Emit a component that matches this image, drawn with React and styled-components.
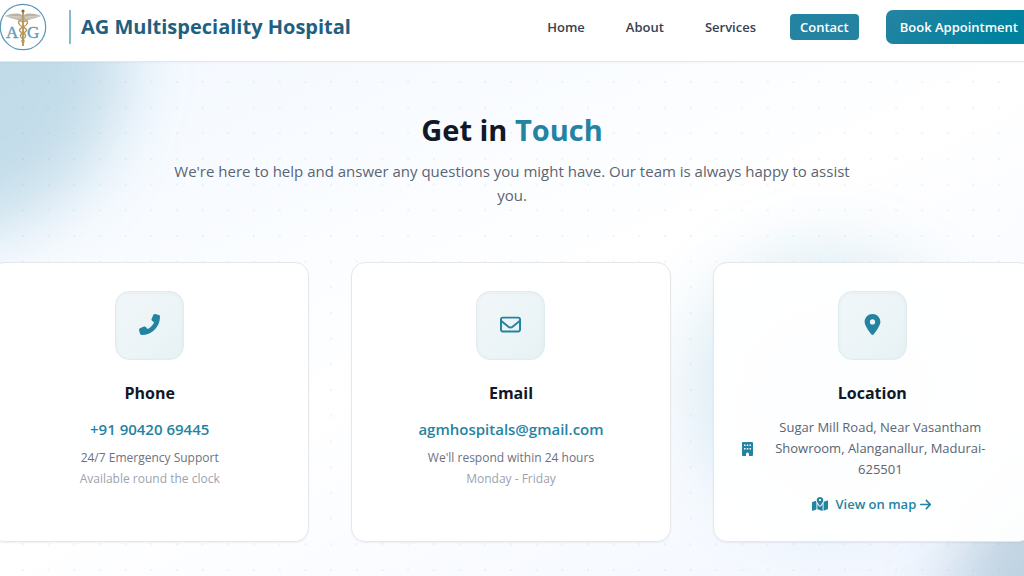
import React from 'react'
import styled, { createGlobalStyle } from 'styled-components'
import {
    FaArrowRight,
    FaLocationDot,
    FaMapLocationDot,
    FaPhone,
    FaRegEnvelope
} from 'react-icons/fa6'

const GlobalStyle = createGlobalStyle`
    * {
        box-sizing: border-box;
    }

    body {
        margin: 0;
        font-family: "Open Sans", "Noto Sans", sans-serif;
        color: #111827;
        background: white;
        overflow: hidden;
    }

    h1, h2, p {
        margin: 0;
    }

    a {
        text-decoration: none;
    }
`

const Page = styled.div`
    min-height: 100vh;
    display: flex;
    flex-direction: column;
`

const Header = styled.header`
    display: flex;
    align-items: center;
    justify-content: space-between;
    height: 62px;
    margin: 0 -8px 0 -1px;
    padding-bottom: 8px;
    background: white;
    border-bottom: 1px solid #e5e7eb;
    box-shadow: 0 1px 2px rgba(0, 0, 0, 0.03);
    position: relative;
    z-index: 1;
`

const Brand = styled.a`
    display: flex;
    align-items: center;
    color: #1f6080;
`

const LogoImage = styled.svg`
    width: 48px;
    height: 48px;
`

const BrandName = styled.span`
    margin-left: 22px;
    padding-left: 10px;
    border-left: 2px solid #85bccd;
    font-size: 20px;
    font-weight: 700;
    line-height: 34px;
    white-space: nowrap;
`

const Nav = styled.nav`
    display: flex;
    align-items: center;
    font-size: 13px;
    font-weight: 600;
    line-height: 26px;
    white-space: nowrap;
`

const NavLink = styled.a`
    margin: ${props => (props.$active ? '0 27px 0 3px' : '0 21px 0 0')};
    padding: 0 10px;
    border-radius: 4px;
    color: ${props => (props.$active ? 'white' : '#374151')};
    background: ${props => (props.$active ? '#2583a2' : 'transparent')};
`

const BookButton = styled.button`
    padding: 0 14px;
    border: none;
    border-radius: 7px;
    color: white;
    background: linear-gradient(135deg, #2583a2 0%, #00829f 80%);
    font: inherit;
    line-height: 34px;
    cursor: pointer;
`

const Contact = styled.main`
    flex: 1;
    position: relative;
    overflow: hidden;
    padding: 47px 0 33px;
    background: linear-gradient(155deg, #f2f8ff 0%, #ffffff 50%, #f1f6ff 100%);
`

const Dots = styled.div`
    position: absolute;
    inset: 0 -2px;
    background-image: radial-gradient(circle at center, rgba(37, 131, 162, 0.08) 1px, transparent 1px);
    background-size: 2.5% 5%;
    background-position: 12px 7px;
`

const Blob = styled.div`
    position: absolute;
    width: 346px;
    height: 346px;
    border-radius: 50%;
    filter: blur(34px);
`

const BlobLeft = styled(Blob)`
    top: -174px;
    left: -222px;
    background: rgba(37, 131, 162, 0.24);
`

const BlobCenter = styled(Blob)`
    top: 186px;
    right: 60px;
    width: 274px;
    height: 274px;
    background: rgba(37, 145, 170, 0.14);
`

const BlobRight = styled(Blob)`
    right: -272px;
    bottom: -212px;
    background: rgba(31, 96, 128, 0.24);
`

const Intro = styled.div`
    position: relative;
    max-width: 692px;
    margin: 0 auto;
    text-align: center;
`

const Title = styled.h1`
    font-size: 29px;
    font-weight: 700;
    line-height: 42px;

    span {
        color: #2583a2;
    }
`

const Lead = styled.p`
    margin-top: 8px;
    color: #5b6471;
    font-size: 15px;
    line-height: 24px;
`

const CardGrid = styled.div`
    position: relative;
    display: grid;
    grid-template-columns: repeat(3, 1fr);
    gap: 42px;
    margin: 55px -8px 0 -10px;
`

const Card = styled.section`
    display: flex;
    flex-direction: column;
    align-items: center;
    min-height: 280px;
    padding: 28px 28px 26px;
    border: 1px solid #e5e7eb;
    border-radius: 14px;
    background: rgba(255, 255, 255, 0.95);
    box-shadow: 0 1px 2px rgba(0, 0, 0, 0.06);
    text-align: center;
`

const IconBox = styled.div`
    display: flex;
    align-items: center;
    justify-content: center;
    width: 69px;
    height: 69px;
    padding-bottom: 2px;
    border: 1px solid #dfecf0;
    border-radius: 14px;
    color: #2583a2;
    background: linear-gradient(135deg, #f2f7f9, #e7f2f5);
    box-shadow: inset 0 1px 4px rgba(0, 0, 0, 0.04);
    font-size: 21px;
`

const PhoneIcon = styled(FaPhone)`
    transform: scaleX(-1);
`

const CardTitle = styled.h2`
    margin: 20px 0 11px;
    font-size: 16px;
    font-weight: 700;
    line-height: 26px;
`

const CardLink = styled.a`
    margin-bottom: 6px;
    color: #2583a2;
    font-size: 15px;
    font-weight: 600;
    line-height: 24px;
`

const Note = styled.p`
    color: ${props => (props.$light ? '#9ca3af' : '#6b7280')};
    font-size: 12px;
    line-height: 21px;
`

const Address = styled.div`
    display: flex;
    align-items: center;
    width: 100%;

    p {
        flex: 1;
        padding: 0 16px 0 21px;
        color: #5b6471;
        font-size: 13px;
        line-height: 21px;
    }
`

const BuildingIcon = styled.svg`
    flex-shrink: 0;
    width: 11px;
    height: 14px;
    fill: #2583a2;
`

const MapLink = styled.a`
    display: flex;
    align-items: center;
    margin-top: 13px;
    color: #2583a2;
    font-size: 13px;
    font-weight: 600;
    line-height: 22px;

    span {
        margin: 0 3px 0 7px;
    }
`

const Logo = () => (
    <LogoImage viewBox="0 2 48 48" aria-hidden="true">
        <circle cx="24" cy="26" r="22.7" fill="white" stroke="#5c97b8" strokeWidth="1.2" />
        <g fontFamily="Liberation Serif, serif" fontSize="17" fill="#5f9dbd" stroke="#5f9dbd" strokeWidth="0.4">
            <text x="7" y="37">A</text>
            <text x="28" y="37">G</text>
        </g>
        <path
            d="M23 19C18 20 13 17 6 15C10 13 19 11 23 14ZM25 19C30 20 35 17 42 15C38 13 29 11 25 14Z"
            fill="#b9b4a6"
        />
        <path d="M8 15L22 16M13 17L22 17M40 15L26 16M35 17L26 17" stroke="#e8e4db" strokeWidth="0.6" />
        <path d="M24 10V45" stroke="#a98545" strokeWidth="1.6" />
        <circle cx="24" cy="10" r="1.6" fill="#8d6d37" />
        <path
            d="M24 21C17 17 19 24 24 26C30 29 27 31 24 32C20 34 21 36 24 38C26 40 25 41 24 42M24 21C31 17 29 24 24 26C18 29 21 31 24 32C28 34 27 36 24 38C22 40 23 41 24 42"
            fill="none"
            stroke="#b8975c"
            strokeWidth="1.4"
        />
    </LogoImage>
)

const Building = () => (
    <BuildingIcon viewBox="0 0 22 28" aria-hidden="true">
        <path
            fillRule="evenodd"
            d="M2 0H20Q22 0 22 2V26Q22 28 20 28H14V24Q14 21 11 21Q8 21 8 24V28H2Q0 28 0 26V2Q0 0 2 0ZM4 5V8H7V5ZM9.500 5V8H12.500V5ZM15 5V8H18V5ZM4 12V15H7V12ZM9.500 12V15H12.500V12ZM15 12V15H18V12Z"
        />
    </BuildingIcon>
)

const App = () => (
    <Page>
        <GlobalStyle />
        <Header>
            <Brand href="#home">
                <Logo />
                <BrandName>AG Multispeciality Hospital</BrandName>
            </Brand>
            <Nav>
                <NavLink href="#home">Home</NavLink>
                <NavLink href="#about">About</NavLink>
                <NavLink href="#services">Services</NavLink>
                <NavLink href="#contact" $active>Contact</NavLink>
                <BookButton>Book Appointment</BookButton>
            </Nav>
        </Header>
        <Contact>
            <BlobLeft />
            <BlobCenter />
            <BlobRight />
            <Dots />
            <Intro>
                <Title>Get in <span>Touch</span></Title>
                <Lead>
                    We're here to help and answer any questions you might have. Our team is always happy to assist you.
                </Lead>
            </Intro>
            <CardGrid>
                <Card>
                    <IconBox><PhoneIcon /></IconBox>
                    <CardTitle>Phone</CardTitle>
                    <CardLink href="tel:+919042069445">+91 90420 69445</CardLink>
                    <Note>24/7 Emergency Support</Note>
                    <Note $light>Available round the clock</Note>
                </Card>
                <Card>
                    <IconBox><FaRegEnvelope /></IconBox>
                    <CardTitle>Email</CardTitle>
                    <CardLink href="mailto:agmhospitals@gmail.com">agmhospitals@gmail.com</CardLink>
                    <Note>We'll respond within 24 hours</Note>
                    <Note $light>Monday - Friday</Note>
                </Card>
                <Card>
                    <IconBox><FaLocationDot /></IconBox>
                    <CardTitle>Location</CardTitle>
                    <Address>
                        <Building />
                        <p>Sugar Mill Road, Near Vasantham Showroom, Alanganallur, Madurai-625501</p>
                    </Address>
                    <MapLink href="#map">
                        <FaMapLocationDot size={16} />
                        <span>View on map</span>
                        <FaArrowRight />
                    </MapLink>
                </Card>
            </CardGrid>
        </Contact>
    </Page>
)

export default App
